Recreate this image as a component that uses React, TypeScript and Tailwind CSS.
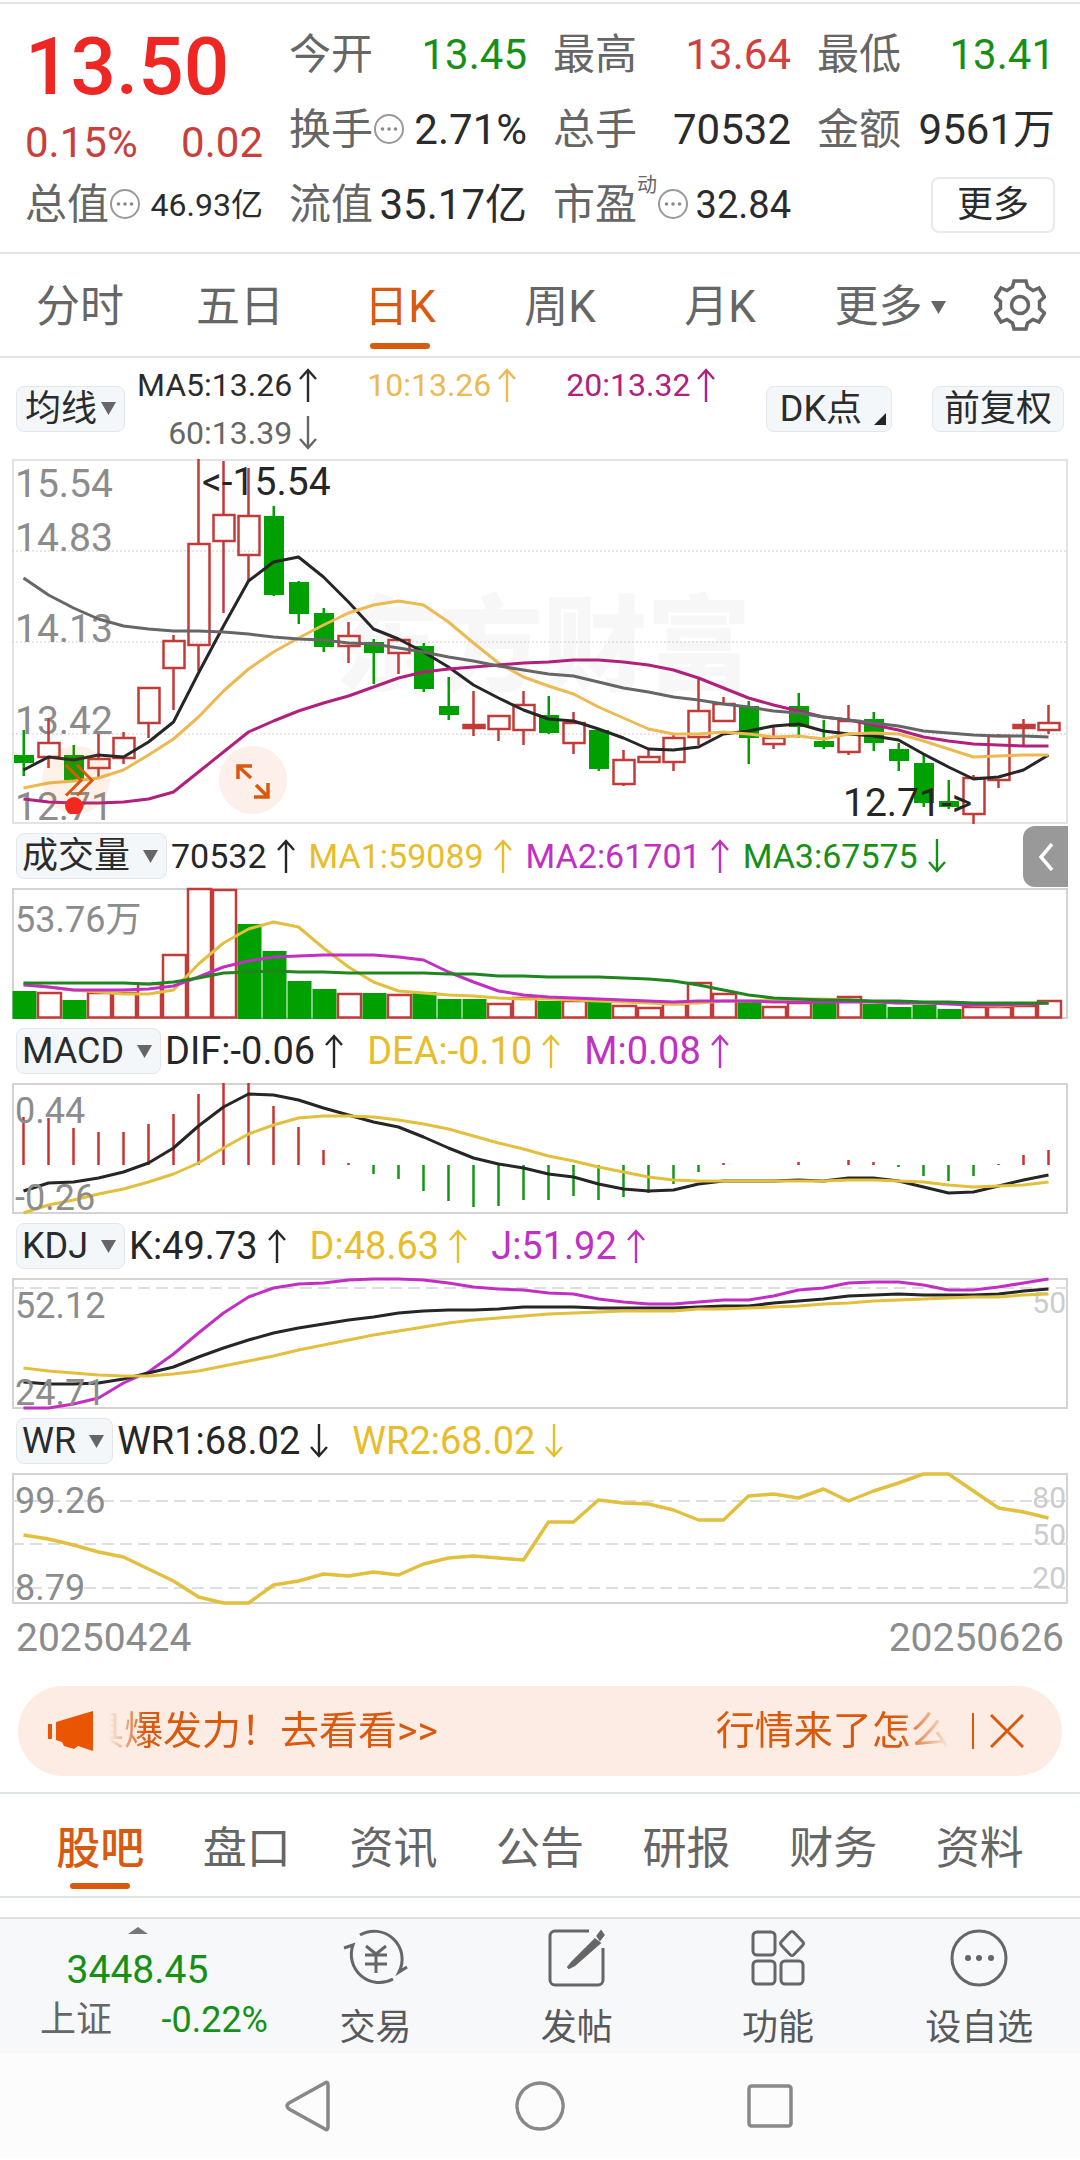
import { useState, type ReactNode } from "react";

type Candle = [dir: "up" | "down", high: number, top: number, bottom: number, low: number];

const RED = "#c23b38";
const GREEN = "#00a000";
const BLACK = "#262626";
const YELLOW = "#e2bf3c";
const AMBER = "#ecb952";
const MAGENTA = "#c22fc4";
const PLUM = "#b0207c";
const GRAY = "#666666";

const STEP = 25;
const FIRST_X = 11.5;

const CANDLES: Candle[] = [
  ["down", 271, 296, 304, 317], ["up", 259, 284, 298, 309], ["down", 286, 296, 321, 321],
  ["up", 275, 300, 309, 319], ["up", 273, 279, 299, 305], ["up", 228, 229, 264, 279],
  ["up", 176, 182, 209, 251], ["up", 0, 85, 186, 212], ["up", 2, 56, 82, 154],
  ["up", 9, 57, 96, 122], ["down", 47, 57, 136, 137], ["down", 122, 123, 155, 165],
  ["down", 149, 154, 188, 193], ["up", 163, 177, 187, 204], ["down", 180, 183, 194, 225],
  ["up", 180, 181, 194, 215], ["down", 184, 187, 230, 233], ["down", 218, 247, 256, 261],
  ["up", 232, 266, 269, 277], ["up", 257, 257, 270, 282], ["up", 232, 246, 271, 286],
  ["down", 237, 256, 274, 275], ["up", 253, 264, 284, 295], ["down", 270, 271, 310, 312],
  ["up", 291, 301, 325, 327], ["up", 289, 298, 303, 303], ["up", 274, 279, 303, 312],
  ["up", 219, 252, 278, 286], ["up", 238, 245, 262, 262], ["down", 242, 247, 279, 305],
  ["up", 268, 279, 285, 290], ["down", 234, 247, 268, 279], ["down", 261, 282, 288, 290],
  ["up", 246, 262, 293, 296], ["down", 253, 260, 284, 292], ["down", 284, 290, 302, 312],
  ["down", 295, 304, 344, 348], ["down", 321, 342, 348, 350], ["up", 316, 319, 355, 365],
  ["up", 275, 277, 321, 329], ["up", 260, 266, 269, 286], ["up", 246, 264, 271, 275],
];

const MA5 = [311, 298, 301, 296, 298, 283, 263, 214, 167, 122, 103, 98, 118, 143, 170, 180, 193, 208, 226, 239, 251, 260, 262, 270, 279, 290, 291, 288, 275, 272, 267, 265, 272, 275, 277, 281, 295, 308, 320, 318, 311, 296];
const MA10 = [329, 324, 322, 319, 311, 296, 280, 258, 232, 210, 193, 179, 166, 154, 146, 142, 146, 163, 184, 204, 218, 227, 235, 248, 259, 270, 275, 275, 273, 275, 278, 277, 280, 275, 274, 275, 282, 290, 298, 297, 296, 296];
const MA20 = [340, 343, 344, 344, 343, 340, 333, 313, 293, 273, 262, 252, 244, 237, 228, 219, 213, 210, 208, 206, 204, 203, 201, 201, 203, 206, 211, 219, 229, 239, 246, 252, 258, 261, 266, 271, 278, 282, 285, 286, 287, 287];
const MA60 = [119, 136, 149, 160, 167, 170, 172, 172, 173, 175, 178, 180, 181, 184, 185, 189, 193, 198, 202, 207, 211, 215, 217, 223, 229, 233, 238, 241, 245, 248, 252, 254, 258, 261, 264, 267, 272, 274, 276, 277, 277, 278];

const VOLUME = [103, 105, 112, 105, 105, 96, 67, 1, 2, 36, 63, 93, 101, 106, 105, 107, 104, 111, 111, 116, 110, 113, 113, 114, 118, 120, 116, 95, 106, 112, 119, 115, 115, 109, 116, 119, 117, 121, 119, 119, 118, 113];
const VOLUME_DOWN = [0, 2, 9, 10, 11, 12, 14, 16, 17, 18, 21, 23, 29, 32, 34, 35, 36, 37];
const VOL1 = [95, 99, 102, 104, 106, 106, 102, 76, 55, 41, 34, 39, 60, 79, 94, 103, 105, 107, 108, 110, 111, 111, 112, 113, 114, 115, 116, 115, 113, 113, 112, 111, 111, 112, 114, 115, 115, 115, 117, 118, 116, 115];
const VOL2 = [97, 99, 102, 102, 102, 101, 98, 89, 79, 73, 69, 68, 67, 67, 67, 69, 72, 84, 94, 103, 107, 109, 110, 111, 112, 113, 114, 113, 113, 113, 114, 114, 114, 114, 114, 115, 115, 116, 117, 117, 116, 115];
const VOL3 = [95, 95, 95, 95, 95, 96, 94, 90, 85, 84, 83, 84, 84, 85, 85, 85, 85, 86, 86, 88, 88, 89, 89, 89, 90, 91, 93, 97, 102, 107, 110, 111, 112, 112, 113, 113, 114, 114, 115, 115, 115, 115];

const MACD_ZERO = 82;
const MACD_BARS = [34, 35, 45, 49, 49, 41, 31, 11, 0, 0, 23, 44, 67, 80, 91, 96, 108, 118, 124, 123, 117, 117, 113, 117, 114, 110, 101, 89, 80, 82, 82, 79, 82, 77, 79, 84, 93, 98, 93, 81, 72, 67];
const DIF = [108, 100, 99, 95, 89, 80, 65, 43, 24, 11, 12, 17, 25, 32, 39, 44, 54, 65, 75, 81, 85, 91, 94, 101, 106, 108, 107, 101, 98, 98, 98, 97, 98, 95, 95, 98, 104, 110, 109, 103, 97, 92];
const DEA = [130, 122, 117, 111, 106, 99, 91, 80, 65, 51, 42, 35, 33, 33, 34, 37, 41, 46, 53, 60, 66, 73, 78, 84, 89, 94, 97, 98, 98, 98, 98, 98, 98, 97, 97, 98, 99, 102, 104, 103, 102, 99];

const KDJ_K = [104, 106, 106, 105, 101, 95, 89, 79, 70, 62, 55, 50, 46, 42, 39, 35, 33, 32, 32, 31, 29, 29, 29, 30, 30, 30, 30, 29, 28, 28, 25, 23, 21, 18, 17, 16, 17, 17, 17, 16, 13, 11];
const KDJ_D = [90, 93, 95, 97, 98, 98, 96, 93, 88, 83, 78, 72, 67, 62, 57, 53, 49, 45, 42, 40, 38, 36, 35, 34, 33, 33, 33, 31, 31, 30, 29, 28, 26, 25, 23, 22, 21, 20, 19, 19, 17, 16];
const KDJ_J = [130, 130, 126, 120, 105, 94, 76, 55, 35, 19, 10, 6, 5, 2, 1, 1, 2, 5, 9, 11, 12, 15, 16, 21, 24, 26, 26, 24, 22, 22, 18, 12, 10, 5, 4, 4, 7, 12, 12, 9, 5, 1];

const WR = [62, 66, 72, 79, 84, 96, 108, 124, 130, 130, 112, 108, 101, 103, 99, 102, 91, 85, 83, 85, 87, 49, 49, 27, 30, 31, 37, 47, 47, 23, 21, 25, 16, 28, 18, 10, 1, 1, 18, 35, 39, 45];

const INDICATORS = ["成交量", "MACD", "KDJ", "WR"];
const PERIODS = ["分时", "五日", "日K", "周K", "月K"];
const SECTIONS = ["股吧", "盘口", "资讯", "公告", "研报", "财务", "资料"];

const cx = (i: number) => FIRST_X + i * STEP;

function Line({ ys, color, width = 3 }: { ys: number[]; color: string; width?: number }) {
  return (
    <polyline
      points={ys.map((y, i) => `${cx(i)},${y}`).join(" ")}
      fill="none" stroke={color} strokeWidth={width} strokeLinejoin="round"
    />
  );
}

function Arrow({ down = false }: { down?: boolean }) {
  return (
    <svg viewBox="0 0 18 34" className="h-[34px] w-[18px] shrink-0" fill="none" stroke="currentColor" strokeWidth="2.4">
      {down ? <path d="M9 0v32M1 23l8 9 8-9" /> : <path d="M9 34V2M1 11l8-9 8 9" />}
    </svg>
  );
}

function Caret({ className }: { className: string }) {
  return (
    <svg viewBox="0 0 15 13" className={className} fill="#666">
      <path d="M0 0h15L7.500 13z" />
    </svg>
  );
}

function Dots() {
  return (
    <svg viewBox="0 0 32 32" className="size-8 shrink-0" fill="none" stroke="#999" strokeWidth="2">
      <circle cx="16" cy="14" r="14" className="translate-y-px" />
      <g fill="#888" stroke="none"><circle cx="9.500" cy="15" r="1.800" /><circle cx="16" cy="15" r="1.800" /><circle cx="22.500" cy="15" r="1.800" /></g>
    </svg>
  );
}

function Stat({ label, value, icon, className = "text-[#2b2b2b]" }: { label: string; value: string; icon?: ReactNode; className?: string }) {
  return (
    <div className="flex h-[75px] items-center whitespace-nowrap text-[42px]">
      <dt className="flex items-center text-[#666]">{label}{icon}</dt>
      <dd className={`ml-auto ${className}`}>{value}</dd>
    </div>
  );
}

function IndicatorBar({ initial, children }: { initial: string; children: ReactNode }) {
  const [value, setValue] = useState(initial);
  return (
    <div className="flex h-16 items-center pl-1 text-[38px]">
      <label className="relative mr-1 flex h-[46px] items-center rounded-lg border border-[#e3e6ea] bg-[#f4f7fa] text-[36px]">
        <select
          aria-label="指标"
          value={value}
          onChange={(e) => setValue(e.target.value)}
          className="field-sizing-content h-full appearance-none bg-transparent pr-9 pl-[5px] leading-[44px] text-[#2b2b2b] outline-none"
        >
          {INDICATORS.map((name) => <option key={name}>{name}</option>)}
        </select>
        <Caret className="pointer-events-none absolute right-2 h-[13px] w-[15px]" />
      </label>
      {children}
    </div>
  );
}

function Reading({ text, color, down }: { text: string; color: string; down?: boolean }) {
  return (
    <span className="flex items-center gap-[10px] whitespace-nowrap" style={{ color }}>
      {text}<Arrow down={down} />
    </span>
  );
}

function SubChart({ top, bottom, topY = 40, children }: { top?: string; bottom?: string; topY?: number; children: ReactNode }) {
  return (
    <svg viewBox="0 0 1056 131" className="block w-full overflow-visible">
      <rect x="1" y="1" width="1054" height="129" fill="none" stroke="#d3d3d3" strokeWidth="2" />
      {children}
      <g fill="#8c8c8c" fontSize="36">
        <text x="3" y={topY}>{top}</text>
        {bottom && <text x="3" y="127">{bottom}</text>}
      </g>
    </svg>
  );
}

function Dashes({ ys }: { ys: number[] }) {
  return (
    <>
      {ys.map((y) => <path key={y} d={`M0 ${y}H1056`} stroke="#dedede" strokeWidth="2" strokeDasharray="12 6" />)}
    </>
  );
}

function PriceChart() {
  return (
    <div className="relative">
      <svg viewBox="0 0 1056 365" className="block w-full overflow-visible">
        <text x="323" y="224" fontSize="104" fontWeight="900" fill="#f7f7f7">东方财富</text>
        <rect x="1" y="1" width="1054" height="363" fill="none" stroke="#e3e3e3" strokeWidth="2" />
        {[92, 183, 275].map((y) => <path key={y} d={`M0 ${y}H1056`} stroke="#d0d0d0" strokeWidth="1" strokeDasharray="2 2" />)}
        <g fill="#8c8c8c" fontSize="39">
          <text x="3" y="38">15.54</text>
          <text x="3" y="92">14.83</text>
          <text x="3" y="183">14.13</text>
          <text x="3" y="275">13.42</text>
          <text x="3" y="361">12.71</text>
        </g>
        {CANDLES.map(([dir, high, top, bottom, low], i) => dir === "up" ? (
          <g key={i} fill={bottom - top < 4 ? RED : "none"} stroke={RED} strokeWidth="2.500">
            <path d={`M${cx(i)} ${high}V${top}M${cx(i)} ${bottom}V${low}`} />
            <rect x={cx(i) - 10} y={top} width="21" height={bottom - top} />
          </g>
        ) : (
          <g key={i} fill={GREEN}>
            <rect x={cx(i) - 1} y={high} width="2.500" height={low - high} />
            <rect x={cx(i) - 9.5} y={top} width="20" height={bottom - top} />
          </g>
        ))}
        <Line ys={MA5} color={BLACK} />
        <Line ys={MA10} color={AMBER} />
        <Line ys={MA20} color={PLUM} />
        <Line ys={MA60} color={GRAY} />
        <g fill={BLACK} fontSize="39">
          <text x="190" y="36">&lt;-15.54</text>
          <text x="831" y="357">12.71-&gt;</text>
        </g>
      </svg>
      <button aria-label="展开" className="absolute bottom-[10px] left-[30px] size-[68px] rounded-full bg-[#f97316]/10">
        <svg viewBox="0 0 68 68" fill="none" stroke="#d9590f" strokeWidth="3">
          <path d="M24 19l15 15.500L24 49.500M35 19l15 15.500L35 49.500" />
          <circle cx="32" cy="60" r="9" fill="#f5281f" stroke="none" />
        </svg>
      </button>
      <button aria-label="全屏" className="absolute bottom-[10px] left-[207px] size-[68px] rounded-full bg-[#fdf0ea]">
        <svg viewBox="0 0 68 68" fill="none" stroke="#d9590f" strokeWidth="3.500">
          <path d="M19 33V20h14M20 21l12 11M49 37v14H35M48 50L37 39" />
        </svg>
      </button>
    </div>
  );
}

function ToolItem({ label, children }: { label: string; children: ReactNode }) {
  return (
    <button className="flex flex-1 flex-col items-center gap-[18px] pt-[9px] text-[36px] leading-[44px] text-[#595959]">
      <svg viewBox="0 0 66 60" className="h-[60px] w-[66px]" fill="none" stroke="#666" strokeWidth="3">{children}</svg>
      {label}
    </button>
  );
}

export default function App() {
  const [period, setPeriod] = useState("日K");
  const [section, setSection] = useState("股吧");
  const [notice, setNotice] = useState(true);

  return (
    <div className="min-h-screen bg-white pt-[2px] font-[Roboto,'Noto_Sans_CJK_SC',sans-serif] leading-none text-[#2b2b2b]">
      <header className="border-y-2 border-[#dfe4e4] px-[25px] pt-[13px] pb-[10px]">
        <dl className="grid grid-cols-4 gap-x-[26px]">
          <div className="row-span-2 text-[42px] text-[#c8403c]">
            <p className="pt-[13px] text-[80px] leading-[75px] font-medium text-[#ee2624]">13.50</p>
            <p className="flex justify-between pt-[17px] leading-[42px]"><span>0.15%</span><span>0.02</span></p>
          </div>
          <Stat label="今开" value="13.45" className="text-[#169016]" />
          <Stat label="最高" value="13.64" className="text-[#d0403c]" />
          <Stat label="最低" value="13.41" className="text-[#169016]" />
          <Stat label="换手" value="2.71%" icon={<Dots />} />
          <Stat label="总手" value="70532" />
          <Stat label="金额" value="9561万" />
          <Stat label="总值" value="46.93亿" icon={<Dots />} className="text-[32px]" />
          <Stat label="流值" value="35.17亿" />
          <Stat label="市盈" value="32.84" className="text-[38px]" icon={<><sup className="-top-5 text-[20px]">动</sup><Dots /></>} />
          <div className="flex h-[75px] items-center justify-end">
            <button className="h-14 rounded-lg border-2 border-[#e6eaea] px-6 text-[36px]">更多</button>
          </div>
        </dl>
      </header>

      <nav className="grid h-[104px] grid-cols-[repeat(5,8fr)_9fr_4fr] border-b-2 border-[#dfe4e4] pr-5 text-[44px] text-[#666]">
        {PERIODS.map((p) => (
          <button key={p} onClick={() => setPeriod(p)} className={`relative pt-1 ${p === period ? "text-[#d9590f]" : ""}`}>
            {p}
            {p === period && <span className="absolute bottom-[7px] left-1/2 h-[6px] w-[60px] -translate-x-1/2 rounded-full bg-[#d9590f]" />}
          </button>
        ))}
        <button className="flex items-center justify-center gap-2 pt-1">更多<Caret className="h-[13px] w-[15px]" /></button>
        <button aria-label="设置" className="flex items-center justify-center">
          <svg viewBox="-26 -26 52 52" className="size-[52px]" fill="none" stroke="#666" strokeWidth="3.500">
            <path d="M-6-24H6L7.500-18 13-14.500 19-17 24.500-8 19.500-3.500V3.500L24.500 8 19 17 13 14.500 7.500 18 6 24H-6L-7.500 18-13 14.500-19 17-24.500 8-19.500 3.500V-3.500L-24.500-8-19-17-13-14.500-7.500-18z" />
            <circle r="8.500" />
          </svg>
        </button>
      </nav>

      <div className="flex h-[101px] items-center px-4 text-[32px] whitespace-nowrap">
        <button className="flex h-[46px] items-center gap-1 rounded-lg border border-[#e3e6ea] bg-[#f4f7fa] px-[8px] text-[36px]">
          均线<Caret className="h-[13px] w-[15px]" />
        </button>
        <div className="ml-3 grid grid-cols-[auto_auto_auto] justify-items-end gap-x-[50px]">
          <span className="flex h-12 items-center gap-[7px]">MA5:13.26<Arrow /></span>
          <span className="flex h-12 items-center gap-[7px] text-[#ecb952]">10:13.26<Arrow /></span>
          <span className="flex h-12 items-center gap-[7px] text-[#b0207c]">20:13.32<Arrow /></span>
          <span className="flex h-12 items-center gap-[7px] text-[#666]">60:13.39<Arrow down /></span>
        </div>
        <button className="ml-auto flex h-[46px] items-center gap-3 rounded-lg border border-[#e3e6ea] bg-[#f4f7fa] pr-[5px] pl-[13px] text-[36px]">
          DK点
          <svg viewBox="0 0 12 12" className="mb-[6px] size-3 self-end" fill="#262626"><path d="M12 0v12H0z" /></svg>
        </button>
        <button className="ml-10 h-[46px] rounded-lg border border-[#e3e6ea] bg-[#f4f7fa] px-[11px] text-[36px]">前复权</button>
      </div>

      <main className="px-3">
        <PriceChart />

        <div className="relative">
          <IndicatorBar initial="成交量">
            <div className="flex gap-[14px] text-[34px]">
              <Reading text="70532" color={BLACK} />
              <Reading text="MA1:59089" color="#e8bd2c" />
              <Reading text="MA2:61701" color={MAGENTA} />
              <Reading text="MA3:67575" color="#169016" down />
            </div>
          </IndicatorBar>
          <button aria-label="收起" className="absolute top-[2px] right-0 flex h-[61px] w-[45px] items-center justify-center rounded-l-xl bg-[#999]">
            <svg viewBox="0 0 16 28" className="h-7 w-4" fill="none" stroke="#fff" strokeWidth="3.500"><path d="M14 1L3 14l11 13" /></svg>
          </button>
        </div>
        <SubChart top="53.76万" topY={44}>
          {VOLUME.map((y, i) => VOLUME_DOWN.includes(i)
            ? <rect key={i} x={STEP * i + 0.5} y={y} width="24" height={131 - y} fill={GREEN} />
            : <rect key={i} x={STEP * i + 1} y={y} width="23" height={129.5 - y} fill="#fff" stroke={RED} strokeWidth="2.500" />)}
          <Line ys={VOL1} color={YELLOW} />
          <Line ys={VOL2} color={MAGENTA} />
          <Line ys={VOL3} color="#1f861f" />
        </SubChart>

        <IndicatorBar initial="MACD">
          <div className="flex gap-6">
            <Reading text="DIF:-0.06" color={BLACK} />
            <Reading text="DEA:-0.10" color="#e8bd2c" />
            <Reading text="M:0.08" color={MAGENTA} />
          </div>
        </IndicatorBar>
        <SubChart top="0.44" bottom="-0.26">
          {MACD_BARS.map((y, i) => y !== MACD_ZERO && (
            <path key={i} d={`M${cx(i)} ${MACD_ZERO}V${y}`} stroke={y < MACD_ZERO ? "#c8322f" : "#149614"} strokeWidth="2.500" />
          ))}
          <Line ys={DIF} color={BLACK} />
          <Line ys={DEA} color={YELLOW} />
        </SubChart>

        <IndicatorBar initial="KDJ">
          <div className="flex gap-6">
            <Reading text="K:49.73" color={BLACK} />
            <Reading text="D:48.63" color="#e8bd2c" />
            <Reading text="J:51.92" color={MAGENTA} />
          </div>
        </IndicatorBar>
        <SubChart top="52.12" bottom="24.71">
          <Dashes ys={[10]} />
          <text x="1054" y="35" fontSize="30" textAnchor="end" fill="#ccc">50</text>
          <Line ys={KDJ_J} color={MAGENTA} />
          <Line ys={KDJ_K} color={BLACK} />
          <Line ys={KDJ_D} color={YELLOW} />
        </SubChart>

        <IndicatorBar initial="WR">
          <div className="flex gap-6">
            <Reading text="WR1:68.02" color={BLACK} down />
            <Reading text="WR2:68.02" color="#e8bd2c" down />
          </div>
        </IndicatorBar>
        <SubChart top="99.26" bottom="8.79">
          <Dashes ys={[28, 71, 115]} />
          <g fontSize="30" textAnchor="end" fill="#ccc">
            <text x="1054" y="35">80</text>
            <text x="1054" y="72">50</text>
            <text x="1054" y="115">20</text>
          </g>
          <Line ys={WR} color={YELLOW} width={3.500} />
        </SubChart>

        <div className="flex h-[82px] justify-between px-1 pt-3 text-[39px] leading-[44px] text-[#8c8c8c]">
          <time>20250424</time>
          <time>20250626</time>
        </div>
      </main>

      {notice && (
        <div className="mx-[18px] mb-4 flex h-[90px] items-center rounded-full bg-[#fcece3] pr-[38px] pl-[29px] text-[#d9590f]">
          <svg viewBox="0 0 46 40" className="h-10 w-[46px] shrink-0" fill="#ea5504">
            <path d="M1 13h4v15H1zM9 11L46 0v40L31 35l-4 3-10-3-2-4-6-2z" />
          </svg>
          <div className="ml-4 flex min-w-0 flex-1 gap-[278px] overflow-hidden text-[39px] leading-[50px] whitespace-nowrap [mask-image:linear-gradient(to_right,transparent,black_36px,black_calc(100%-60px),transparent_calc(100%-10px))]">
            <a href="#power" className="-ml-6 shrink-0">具爆发力！去看看&gt;&gt;</a>
            <a href="#market" className="shrink-0">行情来了怎么办</a>
          </div>
          <span className="mr-4 ml-3 h-9 w-[2px] shrink-0 bg-[#d9590f]" />
          <button aria-label="关闭" onClick={() => setNotice(false)} className="shrink-0">
            <svg viewBox="0 0 34 34" className="size-[34px]" stroke="#d9590f" strokeWidth="3"><path d="M1 1l32 32M33 1L1 33" /></svg>
          </button>
        </div>
      )}

      <nav className="flex h-[106px] border-y-2 border-[#dfe4e4] px-[27px] text-[44px] text-[#666]">
        {SECTIONS.map((s) => (
          <button key={s} onClick={() => setSection(s)} className={`relative flex-1 pt-2 ${s === section ? "font-medium text-[#d9590f]" : ""}`}>
            {s}
            {s === section && <span className="absolute bottom-[7px] left-1/2 h-[6px] w-[60px] -translate-x-1/2 rounded-full bg-[#d9590f]" />}
          </button>
        ))}
      </nav>

      <footer className="mt-[19px]">
        <div className="flex h-[136px] border-t-2 border-[#dfe1e3] bg-[#f6f8fa]">
          <button className="flex w-[275px] flex-col items-center pt-2 text-[#169016]">
            <svg viewBox="0 0 20 7" className="h-[7px] w-5" fill="#777"><path d="M10 0l10 7H0z" /></svg>
            <span className="pt-[14px] text-[39px] leading-[44px]">3448.45</span>
            <span className="flex w-full justify-between pt-[6px] pr-[7px] pl-10 text-[36px] leading-[44px]"><span className="text-[#666]">上证</span>-0.22%</span>
          </button>
          <ToolItem label="交易">
            <path d="M17 7A28 28 0 0 1 56 44L64 39M50 51A28 28 0 0 1 10 17L1 20M23 18l10 8 10-8M22 27h22M22 36h22M33 26v19" />
          </ToolItem>
          <ToolItem label="发帖">
            <path d="M45 3H11a5 5 0 0 0-5 5v44a5 5 0 0 0 5 5h43a5 5 0 0 0 5-5V20" />
            <path d="M51 12L28 35l-4 5 6-3 25-22zM54 8l3-4 2 3-3 4z" fill="#666" />
          </ToolItem>
          <ToolItem label="功能">
            <rect x="8" y="4" width="22" height="23" rx="4" />
            <rect x="8" y="33" width="22" height="23" rx="4" />
            <rect x="36" y="33" width="22" height="23" rx="4" />
            <path d="M45 4.500q2-2 4 0l8.500 9q2 2 0 4l-8.500 9q-2 2-4 0l-8.500-9q-2-2 0-4z" />
          </ToolItem>
          <ToolItem label="设自选">
            <circle cx="33" cy="30" r="27" />
            <g fill="#666" stroke="none"><circle cx="22" cy="30" r="3" /><circle cx="33" cy="30" r="3" /><circle cx="45" cy="30" r="3" /></g>
          </ToolItem>
        </div>
        <div className="flex h-[105px] items-center justify-center gap-[176px] bg-[#fcfcfc]">
          {[
            ["返回", "M42 4Q45 2 45 6V48Q45 52 42 50L6 30Q2 27 6 24z"],
            ["主页", "M27 4a23 23 0 1 0 .1 0z"],
            ["最近任务", "M9 7H45Q48 7 48 10V44Q48 47 45 47H9Q6 47 6 44V10Q6 7 9 7z"],
          ].map(([label, d]) => (
            <button key={label} aria-label={label}>
              <svg viewBox="0 0 54 54" className="size-[54px]" fill="none" stroke="#888" strokeWidth="3.500"><path d={d} /></svg>
            </button>
          ))}
        </div>
      </footer>
    </div>
  );
}
